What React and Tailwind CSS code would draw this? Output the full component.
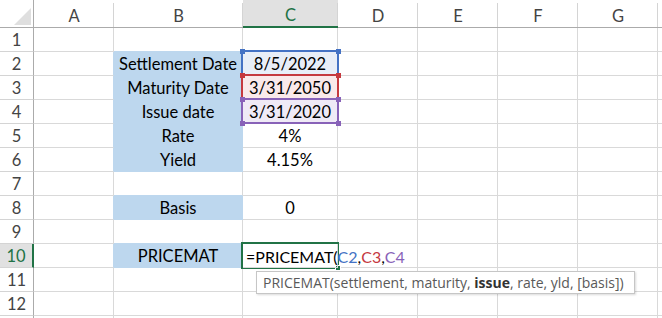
import React from "react";

const COLS = ["A", "B", "C", "D", "E", "F", "G"];
const FILLED = [2, 3, 4, 5, 6, 8, 10];

const LABELS = {
  2: "Settlement Date",
  3: "Maturity Date",
  4: "Issue date",
  5: "Rate",
  6: "Yield",
  8: "Basis",
  10: "PRICEMAT",
};

const VALUES = {
  2: "8/5/2022",
  3: "3/31/2050",
  4: "3/31/2020",
  5: "4%",
  6: "4.15%",
  8: "0",
};

const REF_BG = {
  2: "bg-[#e8eef8]",
  3: "bg-[#f9e9ea]",
  4: "bg-[#efeaf6]",
};

// range-reference boxes drawn over C2:C4
const REFS = [
  { top: "top-[50px]", border: "border-[#4472c4]" },
  { top: "top-[74px]", border: "border-[#c5393f]" },
  { top: "top-[98px]", border: "border-[#8862b8]" },
];

const HANDLES = [
  { y: "top-[49px]", c: "bg-[#4472c4]" },
  { y: "top-[73px]", c: "bg-[#c5393f]" },
  { y: "top-[97px]", c: "bg-[#8862b8]" },
  { y: "top-[121px]", c: "bg-[#8862b8]" },
];

function HeaderCell({ label }) {
  const active = label === "C";
  return (
    <div
      className={`relative flex items-center justify-center pt-[5px] ${
        active
          ? "bg-[#e1e1e1] text-[#217346] border-b-2 border-b-[#217346]"
          : "text-[#444] border-b border-b-[#ababab]"
      }`}
    >
      {label}
      <span className="absolute right-0 top-[3px] bottom-0 w-px bg-[#d4d4d4]" />
    </div>
  );
}

function Row({ r }) {
  const filled = FILLED.includes(r);
  const nextFilled = FILLED.includes(r + 1);
  const active = r === 10;
  return (
    <>
      <div
        className={`flex items-center justify-center pt-[2px] border-b border-b-[#d4d4d4] ${
          active
            ? "bg-[#e1e1e1] text-[#217346] border-r-2 border-r-[#217346]"
            : "text-[#444] border-r border-r-[#ababab]"
        }`}
      >
        {r <= 12 ? r : ""}
      </div>
      {/* A */}
      <div
        className={`border-b border-b-[#d9d9d9] border-r ${
          filled ? "border-r-[#bdd7ee]" : "border-r-[#d9d9d9]"
        }`}
      />
      {/* B */}
      <div
        className={`flex items-center justify-center pt-[2px] border-r border-b text-black ${
          filled ? "bg-[#bdd7ee] border-r-[#bdd7ee]" : "border-r-[#d9d9d9]"
        } ${filled || nextFilled ? "border-b-[#bdd7ee]" : "border-b-[#d9d9d9]"}`}
      >
        {LABELS[r]}
      </div>
      {/* C */}
      {active ? (
        <div className="relative z-10 flex items-center pl-[3px] pt-[2px] whitespace-nowrap border-r border-b border-[#d9d9d9] text-black text-[16px]">
          <span>=PRICEMAT(</span>
          <span className="text-[#4472c4]">C2</span>
          <span>,</span>
          <span className="text-[#c5393f]">C3</span>
          <span>,</span>
          <span className="text-[#8862b8]">C4</span>
          <span className="ml-[1px] w-px h-[21px] bg-black" />
        </div>
      ) : (
        <div
          className={`flex items-center justify-center pt-[2px] border-r border-b border-[#d9d9d9] text-black ${
            REF_BG[r] || ""
          }`}
        >
          {VALUES[r]}
        </div>
      )}
      {["D", "E", "F", "G", "H"].map((c) => (
        <div key={c} className="border-r border-b border-[#d9d9d9]" />
      ))}
    </>
  );
}

export default function App() {
  const rows = Array.from({ length: 13 }, (_, i) => i + 1);
  return (
    <div
      className="relative w-[662px] h-[318px] overflow-hidden bg-white text-[16.5px] leading-none"
      style={{ fontFamily: "Lato, 'Liberation Sans', sans-serif" }}
    >
      <div className="grid grid-cols-[34px_80px_129px_95px_80px_80px_80px_80px_80px] grid-rows-[28px_repeat(13,24px)]">
        {/* corner */}
        <div className="relative border-r border-b border-[#ababab]">
          <svg
            className="absolute left-[14px] top-[8px]"
            width="17"
            height="17"
            viewBox="0 0 17 17"
          >
            <polygon points="17,0 17,17 0,17" fill="#dfdfdf" />
          </svg>
        </div>
        {COLS.map((c) => (
          <HeaderCell key={c} label={c} />
        ))}
        <div className="border-b border-b-[#ababab]" />
        {rows.map((r) => (
          <Row key={r} r={r} />
        ))}
      </div>

      {/* reference boxes */}
      {REFS.map((b, i) => (
        <div
          key={i}
          className={`absolute left-[241px] w-[98px] h-[26px] border-2 ${b.top} ${b.border}`}
        />
      ))}
      {HANDLES.map((h, i) => (
        <React.Fragment key={i}>
          <div className={`absolute left-[240px] w-[5px] h-[5px] ${h.y} ${h.c}`} />
          <div className={`absolute left-[336px] w-[5px] h-[5px] ${h.y} ${h.c}`} />
        </React.Fragment>
      ))}

      {/* active cell */}
      <div className="absolute left-[241px] top-[242px] w-[98px] h-[27px] border-2 border-[#217346]" />
      <div className="absolute left-[335px] top-[265px] w-[6px] h-[6px] bg-[#217346] border border-white" />

      {/* function tooltip */}
      <div
        className="absolute left-[256px] top-[271px] w-[379px] h-[23px] bg-white border border-[#c6c6c6] shadow-[1px_1px_2px_rgba(0,0,0,0.15)] flex items-center pl-[6px] text-[14px] text-[#595959] whitespace-nowrap"
        style={{ fontFamily: "'Open Sans', 'Noto Sans', sans-serif" }}
      >
        PRICEMAT(settlement, maturity,&nbsp;
        <span className="font-bold text-[#333]">issue</span>, rate, yld, [basis])
      </div>
    </div>
  );
}
